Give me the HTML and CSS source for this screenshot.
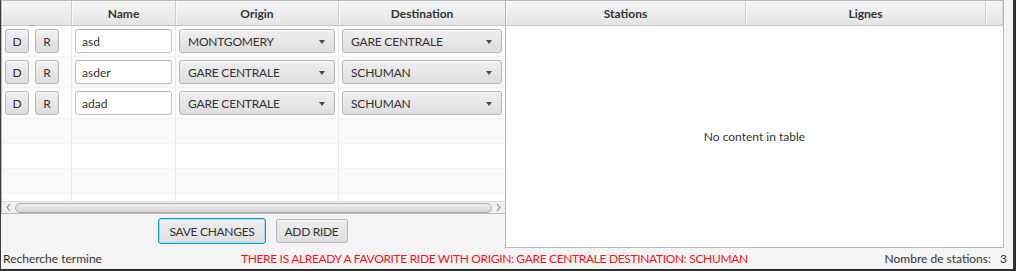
FILE: index.html
```html
<!DOCTYPE html>
<html lang="en">
  <head>
    <title>Favorite rides</title>
    <meta charset="UTF-8" />
    <link rel="stylesheet" href="styles.css">
  </head>
  <body>
    <div class="window">
      <div class="main">
        <div class="left">
          <div class="table rides">
            <div class="thead">
              <div class="th"></div>
              <div class="th">Name</div>
              <div class="th">Origin</div>
              <div class="th">Destination</div>
            </div>
            <div class="tbody">
              <div class="row tall">
                <div class="cell acts"><button class="btn sq">D</button><button class="btn sq">R</button></div>
                <div class="cell"><input class="field" type="text" value="asd"></div>
                <div class="cell"><div class="combo">MONTGOMERY<span class="arrow"></span></div></div>
                <div class="cell"><div class="combo">GARE CENTRALE<span class="arrow"></span></div></div>
              </div>
              <div class="row tall odd">
                <div class="cell acts"><button class="btn sq">D</button><button class="btn sq">R</button></div>
                <div class="cell"><input class="field" type="text" value="asder"></div>
                <div class="cell"><div class="combo">GARE CENTRALE<span class="arrow"></span></div></div>
                <div class="cell"><div class="combo">SCHUMAN<span class="arrow"></span></div></div>
              </div>
              <div class="row tall">
                <div class="cell acts"><button class="btn sq">D</button><button class="btn sq">R</button></div>
                <div class="cell"><input class="field" type="text" value="adad"></div>
                <div class="cell"><div class="combo">GARE CENTRALE<span class="arrow"></span></div></div>
                <div class="cell"><div class="combo">SCHUMAN<span class="arrow"></span></div></div>
              </div>
              <div class="row odd"><div class="cell"></div><div class="cell"></div><div class="cell"></div><div class="cell"></div></div>
              <div class="row"><div class="cell"></div><div class="cell"></div><div class="cell"></div><div class="cell"></div></div>
              <div class="row odd"><div class="cell"></div><div class="cell"></div><div class="cell"></div><div class="cell"></div></div>
              <div class="row"><div class="cell"></div><div class="cell"></div><div class="cell"></div><div class="cell"></div></div>
            </div>
            <div class="hscroll">
              <svg class="sarrow" width="9" height="11" viewBox="0 0 9 11"><polyline points="6,2 3,5.5 6,9" fill="none" stroke="#9c9c9c" stroke-width="1.2"/></svg>
              <div class="thumb"></div>
              <svg class="sarrow" width="9" height="11" viewBox="0 0 9 11"><polyline points="3,2 6,5.5 3,9" fill="none" stroke="#9c9c9c" stroke-width="1.2"/></svg>
            </div>
          </div>
          <div class="actions">
            <button class="btn wide focused">SAVE CHANGES</button>
            <button class="btn wide">ADD RIDE</button>
          </div>
        </div>
        <div class="table results">
          <div class="thead">
            <div class="th">Stations</div>
            <div class="th">Lignes</div>
            <div class="th"></div>
          </div>
          <div class="empty">No content in table</div>
        </div>
      </div>
      <div class="status">
        <span class="status__left">Recherche termine</span>
        <span class="status__error">THERE IS ALREADY A FAVORITE RIDE WITH ORIGIN: GARE CENTRALE DESTINATION: SCHUMAN</span>
        <span class="status__count">Nombre de stations:<span class="status__num">3</span></span>
      </div>
    </div>
  </body>
</html>
```

FILE: styles.css
```css
body {
  margin: 0;
  background: #2d2d2d;
  font-family: Lato, "Liberation Sans", sans-serif;
  font-size: 12px;
  color: #333333;
}

.window {
  width: 1016px;
  height: 271px;
  box-sizing: border-box;
  background: #f4f4f4;
  border-left: 1px solid #3c3c3c;
  border-right: 3px solid #2d2d2d;
  border-bottom: 2px solid #2d2d2d;
  display: flex;
  flex-direction: column;
}

.main {
  display: flex;
  height: 248px;
}

.left {
  width: 504px;
  display: flex;
  flex-direction: column;
}

/* tables */
.table {
  box-sizing: border-box;
  border: 1px solid #b8b8b8;
  background: #ffffff;
  display: flex;
  flex-direction: column;
  overflow: hidden;
}

.rides {
  height: 214px;
  border-right: none;
}

.results {
  width: 499px;
  height: 248px;
}

.thead {
  display: grid;
  height: 24px;
  border-bottom: 1px solid #c4c4c4;
  background: linear-gradient(#f6f6f6, #e4e4e4);
}

.rides .thead,
.rides .row {
  grid-template-columns: 70px 104px 163px 1fr;
}

.results .thead {
  grid-template-columns: 240px 240px 1fr;
}

.th {
  display: flex;
  align-items: center;
  justify-content: center;
  font-weight: bold;
  border-right: 1px solid #cfcfcf;
  box-shadow: inset 1px 0 0 #fafafa;
}

.rides .th:last-child {
  border-right: none;
}

.tbody {
  flex: 1;
  overflow: hidden;
}

.row {
  display: grid;
  height: 24px;
  background: #ffffff;
  border-bottom: 1px solid #f2f2f2;
}

.row.odd {
  background: #f9f9f9;
}

.row.tall {
  height: 30px;
}

.cell {
  display: flex;
  align-items: center;
  padding: 0 3px;
  border-right: 1px solid #e9e9e9;
  min-width: 0;
}

.cell:last-child {
  border-right: none;
}

.cell.acts {
  gap: 6px;
  padding-left: 3px;
}

/* controls */
.btn {
  font: inherit;
  color: #333333;
  height: 24px;
  box-sizing: border-box;
  border: 1px solid #b5b5b5;
  border-radius: 3px;
  background: linear-gradient(#efefef, #dedede);
  box-shadow: inset 0 1px 0 #fbfbfb;
  padding: 0;
}

.btn.sq {
  width: 24px;
}

.btn.wide {
  height: 24px;
  padding: 0 8px;
  letter-spacing: -0.3px;
}

.btn.focused {
  height: 26px;
  border: 1px solid #039ed3;
  box-shadow: inset 0 0 0 1px #a6dbef, inset 0 2px 0 #fbfbfb;
  padding: 0 10px;
}

.field {
  font: inherit;
  color: #333333;
  width: 97px;
  height: 24px;
  box-sizing: border-box;
  border: 1px solid #c2c2c2;
  border-top-color: #b4b4b4;
  border-radius: 3px;
  padding: 0 6px;
  background: #ffffff;
  margin-left: 0;
}

.combo {
  position: relative;
  flex: 1;
  height: 24px;
  box-sizing: border-box;
  display: flex;
  align-items: center;
  padding-left: 8px;
  letter-spacing: -0.2px;
  border: 1px solid #b5b5b5;
  border-radius: 3px;
  background: linear-gradient(#efefef, #dedede);
  box-shadow: inset 0 1px 0 #fbfbfb;
}

.arrow {
  position: absolute;
  right: 9px;
  top: 10px;
  width: 0;
  height: 0;
  border-left: 3.5px solid transparent;
  border-right: 3.5px solid transparent;
  border-top: 4px solid #4a4a4a;
}

/* horizontal scroll bar */
.hscroll {
  height: 11px;
  display: flex;
  align-items: center;
  gap: 2px;
  padding: 0 2px;
  background: #f1f1f1;
  border-top: 1px solid #dcdcdc;
}

.thumb {
  flex: 1;
  height: 8px;
  border: 1px solid #ababab;
  border-radius: 5px;
  background: linear-gradient(#ececec, #d8d8d8);
}

.actions {
  display: flex;
  justify-content: center;
  align-items: flex-start;
  gap: 10px;
  padding-top: 4px;
}

.actions .btn {
  margin-top: 1px;
}

.actions .btn.focused {
  margin-top: 0;
}

.empty {
  flex: 1;
  display: flex;
  align-items: center;
  justify-content: center;
}

/* status line */
.status {
  height: 21px;
  display: flex;
  align-items: center;
  padding: 0 6px 0 2px;
}

.status__error {
  color: #f61414;
  margin-left: 139px;
  letter-spacing: -0.34px;
}

.status__count {
  margin-left: auto;
}

.status__num {
  margin-left: 9px;
}
```
